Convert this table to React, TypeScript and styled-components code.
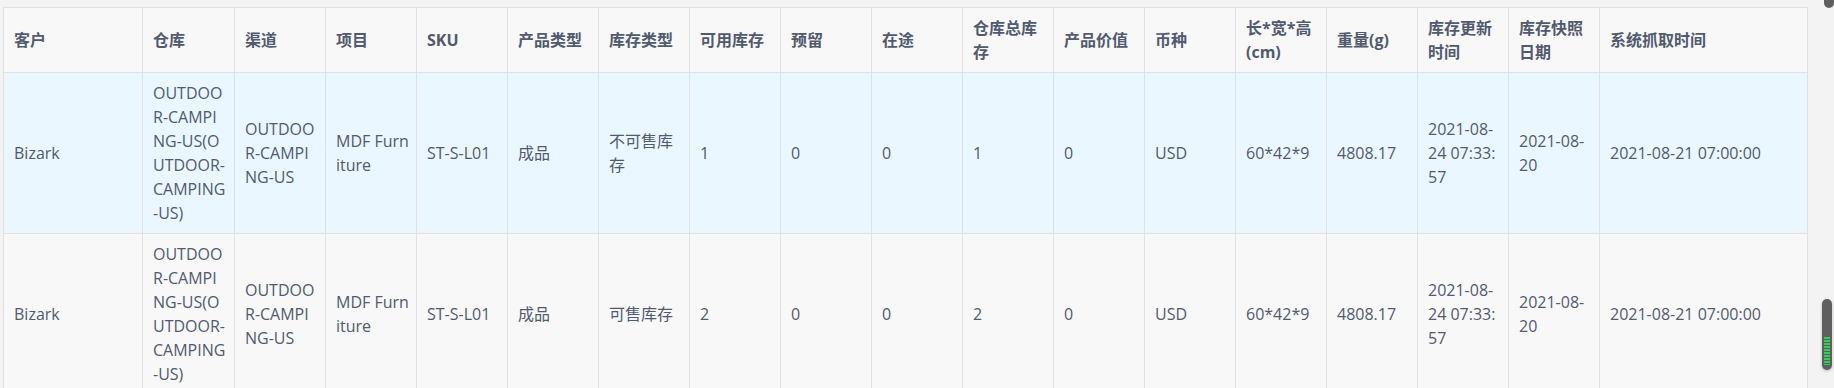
import styled, { createGlobalStyle } from "styled-components";

const GlobalStyle = createGlobalStyle`
  html, body {
    margin: 0;
    padding: 0;
    background: #f3f3f3;
    overflow: hidden;
  }
  body {
    font-family: "Open Sans", "Noto Sans CJK SC", sans-serif;
    color: #515a6e;
  }
`;

interface StockRow {
  customer: string;
  warehouse: string;
  channel: string;
  project: string;
  sku: string;
  productType: string;
  stockType: string;
  available: number;
  reserved: number;
  inTransit: number;
  total: number;
  value: number;
  currency: string;
  size: string;
  weight: string;
  updatedAt: string;
  snapshotDate: string;
  fetchedAt: string;
}

const columns: { title: string; width: number }[] = [
  { title: "客户", width: 139 },
  { title: "仓库", width: 92 },
  { title: "渠道", width: 91 },
  { title: "项目", width: 91 },
  { title: "SKU", width: 91 },
  { title: "产品类型", width: 91 },
  { title: "库存类型", width: 91 },
  { title: "可用库存", width: 91 },
  { title: "预留", width: 91 },
  { title: "在途", width: 91 },
  { title: "仓库总库存", width: 91 },
  { title: "产品价值", width: 91 },
  { title: "币种", width: 91 },
  { title: "长*宽*高 (cm)", width: 91 },
  { title: "重量(g)", width: 91 },
  { title: "库存更新时间", width: 91 },
  { title: "库存快照日期", width: 91 },
  { title: "系统抓取时间", width: 208 },
];

const base = {
  customer: "Bizark",
  warehouse: "OUTDOOR-CAMPING-US(OUTDOOR-CAMPING-US)",
  channel: "OUTDOOR-CAMPING-US",
  project: "MDF Furniture",
  sku: "ST-S-L01",
  productType: "成品",
  reserved: 0,
  inTransit: 0,
  value: 0,
  currency: "USD",
  size: "60*42*9",
  weight: "4808.17",
  updatedAt: "2021-08-24 07:33:57",
  snapshotDate: "2021-08-20",
  fetchedAt: "2021-08-21 07:00:00",
};

const rows: StockRow[] = [
  { ...base, stockType: "不可售库存", available: 1, total: 1 },
  { ...base, stockType: "可售库存", available: 2, total: 2 },
];

function App() {
  return (
    <>
      <GlobalStyle />
      <Page>
        <Table>
          <colgroup>
            {columns.map((c) => (
              <col key={c.title} style={{ width: c.width }} />
            ))}
          </colgroup>
          <thead>
            <tr>
              {columns.map((c) => (
                <Th key={c.title}>{c.title}</Th>
              ))}
            </tr>
          </thead>
          <tbody>
            {rows.map((r, i) => (
              <Tr key={i} $hover={i === 0}>
                <Td>{r.customer}</Td>
                <Td>{r.warehouse}</Td>
                <Td>{r.channel}</Td>
                <Td>{r.project}</Td>
                <Td>{r.sku}</Td>
                <Td>{r.productType}</Td>
                <Td>{r.stockType}</Td>
                <Td>{r.available}</Td>
                <Td>{r.reserved}</Td>
                <Td>{r.inTransit}</Td>
                <Td>{r.total}</Td>
                <Td>{r.value}</Td>
                <Td>{r.currency}</Td>
                <Td>{r.size}</Td>
                <Td>{r.weight}</Td>
                <Td>{r.updatedAt}</Td>
                <Td>{r.snapshotDate}</Td>
                <Td>{r.fetchedAt}</Td>
              </Tr>
            ))}
          </tbody>
        </Table>
        <ThumbCap />
        <ScrollThumb />
      </Page>
    </>
  );
}

const Page = styled.div`
  position: relative;
  height: 388px;
  padding: 7px 0 0 3px;
  box-sizing: border-box;
  overflow: hidden;
`;

const Table = styled.table`
  table-layout: fixed;
  border-collapse: collapse;
  width: 1805px;
  font-size: 16px;
  line-height: 24px;
`;

const Th = styled.th`
  background: #f8f8f9;
  border: 1px solid #dfe1e5;
  padding: 8px 6px 8px 10px;
  text-align: left;
  font-weight: 700;
  color: #515a6e;
  word-break: break-all;
  vertical-align: middle;
`;

const Tr = styled.tr<{ $hover?: boolean }>`
  background: ${(p) => (p.$hover ? "#ebf7ff" : "#f8f8f9")};
`;

const Td = styled.td`
  border: 1px solid #dfe1e5;
  padding: 8px 6px 8px 10px;
  text-align: left;
  vertical-align: middle;
  word-break: break-all;
  color: #515a6e;
`;

const ScrollThumb = styled.div`
  position: absolute;
  right: 2px;
  top: 299px;
  width: 10px;
  height: 71px;
  border-radius: 5px;
  box-shadow: 0 1px 3px rgba(0, 0, 0, 0.25);
  background:
    repeating-linear-gradient(
      to bottom,
      #2fcf58 0 2px,
      #5f5f5f 2px 3px
    ) 2px 38px / 6px 28px no-repeat,
    #5f5f5f;
`;

const ThumbCap = styled.div`
  position: absolute;
  right: 0;
  top: -4px;
  width: 10px;
  height: 12px;
  border-radius: 5px;
  background: #5f5f5f;
`;

export default App;
